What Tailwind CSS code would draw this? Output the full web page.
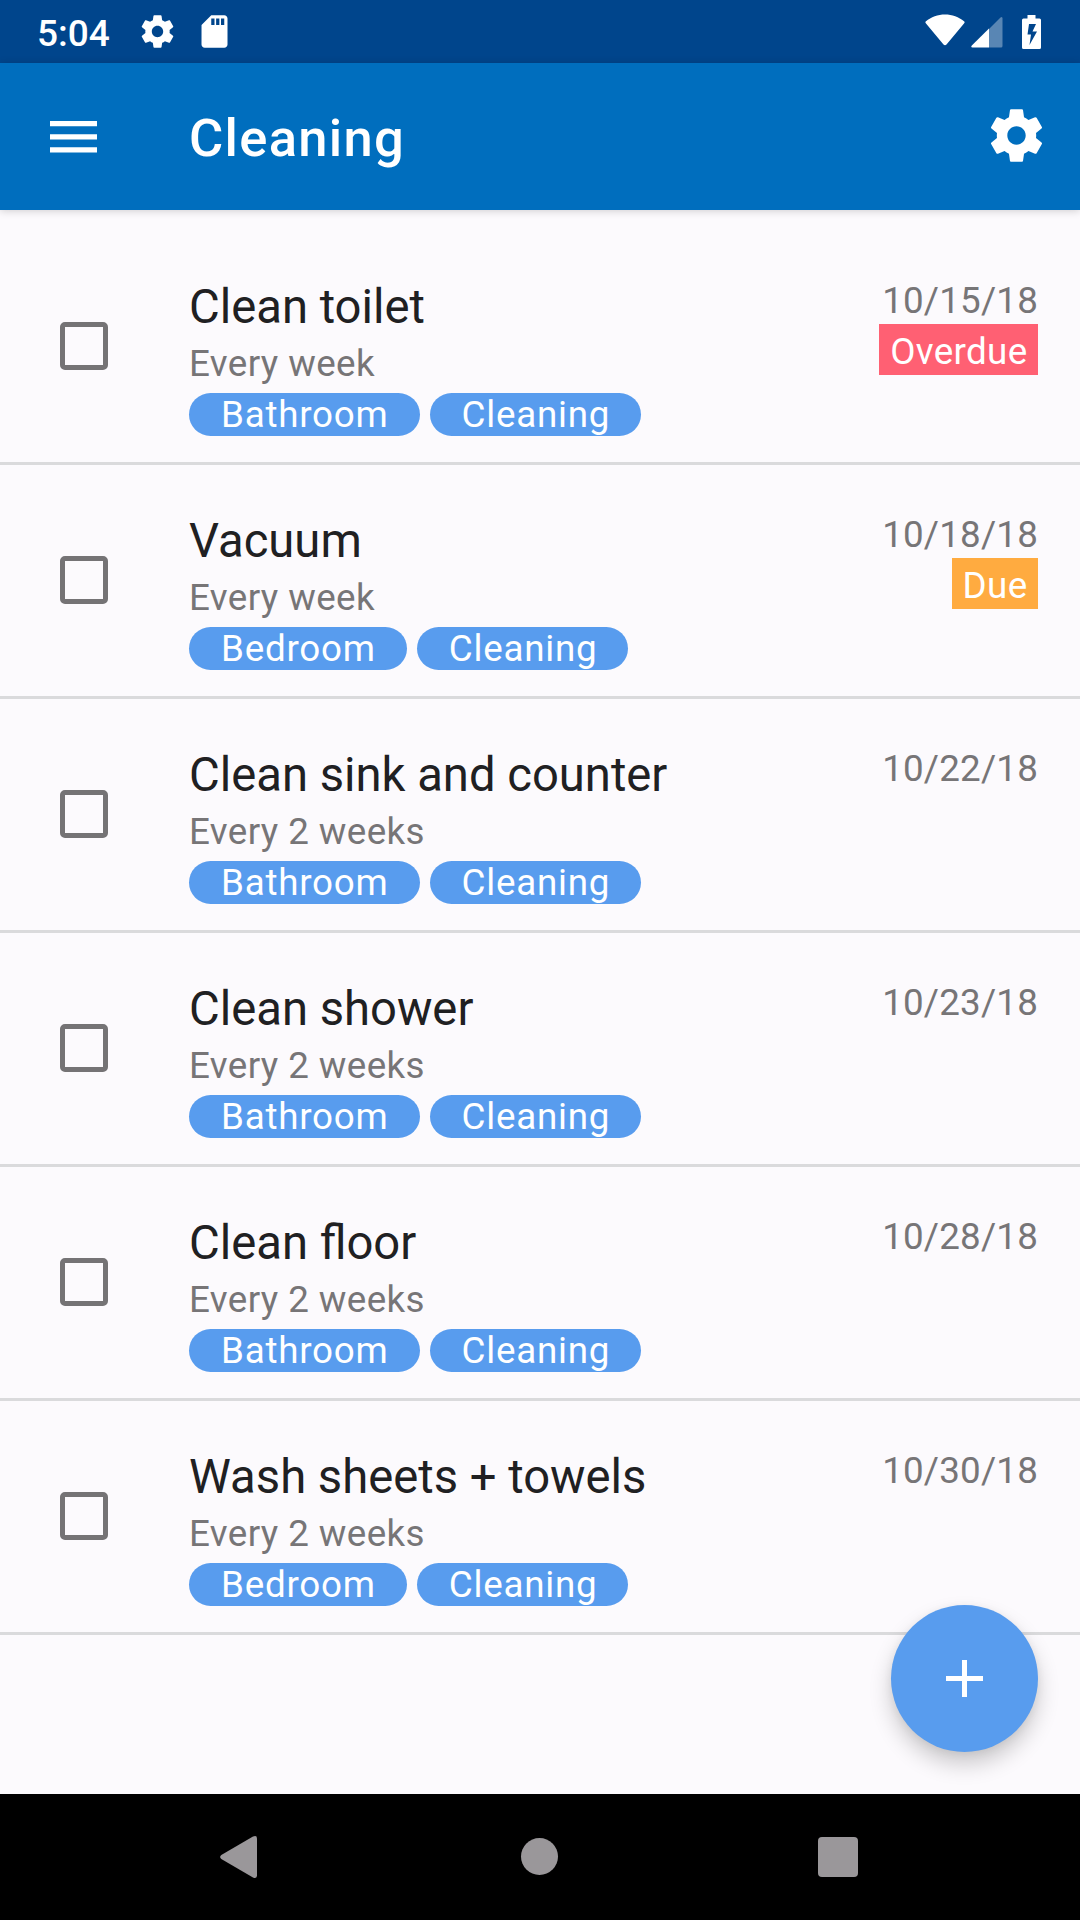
<!DOCTYPE html>
<html lang="en">
<head>
    <meta charset="UTF-8">
    <meta name="viewport" content="width=device-width, initial-scale=1.0">
    <title>Cleaning</title>
    <script src="https://cdn.jsdelivr.net/npm/@tailwindcss/browser@4"></script>
</head>
<body class="bg-[#fcfafd] font-[Roboto,sans-serif]">
    <div class="relative flex flex-col w-[1080px] h-[1920px] overflow-hidden">
        <!-- Status bar -->
        <div class="flex shrink-0 items-center h-[63px] bg-[#00458c] pl-[37px] pr-[39px] text-white">
            <span class="w-[101px] text-[37px] leading-[42px] font-medium pt-[5px]">5:04</span>
            <svg class="w-[39px] h-[39px]" viewBox="0 0 24 24" fill="currentColor"><path d="M19.43 12.98c.04-.32.07-.64.07-.98s-.03-.66-.07-.98l2.11-1.65c.19-.15.24-.42.12-.64l-2-3.46c-.12-.22-.39-.3-.61-.22l-2.49 1c-.52-.4-1.08-.73-1.69-.98l-.38-2.65C14.46 2.18 14.25 2 14 2h-4c-.25 0-.46.18-.49.42l-.38 2.65c-.61.25-1.17.59-1.69.98l-2.49-1c-.23-.09-.49 0-.61.22l-2 3.46c-.13.22-.07.49.12.64l2.11 1.65c-.04.32-.07.65-.07.98s.03.66.07.98l-2.11 1.65c-.19.15-.24.42-.12.64l2 3.46c.12.22.39.3.61.22l2.49-1c.52.4 1.08.73 1.69.98l.38 2.65c.03.24.24.42.49.42h4c.25 0 .46-.18.49-.42l.38-2.65c.61-.25 1.17-.59 1.69-.98l2.49 1c.23.09.49 0 .61-.22l2-3.46c.12-.22.07-.49-.12-.64l-2.11-1.65zM12 15.5c-1.93 0-3.5-1.57-3.5-3.5s1.57-3.5 3.5-3.5 3.5 1.57 3.5 3.5-1.57 3.5-3.5 3.5z"/></svg>
            <svg class="w-[39px] h-[39px] ml-[18px]" viewBox="0 0 24 24" fill="currentColor"><path d="M18 2h-8L4.02 8 4 20c0 1.1.9 2 2 2h12c1.1 0 2-.9 2-2V4c0-1.1-.9-2-2-2zm-6 6h-2V4h2v4zm3 0h-2V4h2v4zm3 0h-2V4h2v4z"/></svg>
            <svg class="w-[40px] h-[32px] ml-auto -mt-[3px]" viewBox="0 0 40 32" fill="currentColor"><path d="M1 9.500Q-.3 8.300 1 7.300C6 3 13 .4 20 .4S34 3 39 7.300q1.300 1 0 2.200L21.500 30.500q-1.500 1.500-3 0z"/></svg>
            <svg class="w-[32px] h-[32px] ml-[6px]" viewBox="0 0 32 32" fill="currentColor"><path fill-opacity=".35" d="M18 13 29.500 1.400Q31.500 0 31.500 2.500V30q0 1.500-1.500 1.500H18z"/><path d="M18 12.500v19H1.500Q-.6 31.500 .8 29.500z"/></svg>
            <svg class="w-[19px] h-[34px] ml-[19px]" viewBox="0 0 19 34" fill="currentColor"><path fill-rule="evenodd" d="M5.500 0h8v3.500h4Q19 3.500 19 5v27.500Q19 34 17.500 34h-16Q0 34 0 32.500V5q0-1.500 1.500-1.500h4zM7 9 5.500 19.500H9L7.500 30 15 16.500H10.500L14 9z"/></svg>
        </div>

        <!-- App bar -->
        <div class="relative z-10 flex shrink-0 items-center h-[147px] bg-[#006ebe] pl-[50px] pr-[32px] text-white shadow-[0_1px_8px_rgba(0,0,0,0.18)]">
            <svg class="w-[47px] h-[32px]" viewBox="0 0 47 32" fill="currentColor"><path d="M0 0h47v5.200H0zM0 13.200h47v5.200H0zM0 26.300h47v5.200H0z"/></svg>
            <h1 class="ml-[92px] pt-[3px] text-[52.5px] leading-[62px] font-medium tracking-[1.3px]">Cleaning</h1>
            <svg class="w-[63px] h-[63px] ml-auto -mt-[2px]" viewBox="0 0 24 24" fill="currentColor"><path d="M19.43 12.98c.04-.32.07-.64.07-.98s-.03-.66-.07-.98l2.11-1.65c.19-.15.24-.42.12-.64l-2-3.46c-.12-.22-.39-.3-.61-.22l-2.49 1c-.52-.4-1.08-.73-1.69-.98l-.38-2.65C14.46 2.18 14.25 2 14 2h-4c-.25 0-.46.18-.49.42l-.38 2.65c-.61.25-1.17.59-1.69.98l-2.49-1c-.23-.09-.49 0-.61.22l-2 3.46c-.13.22-.07.49.12.64l2.11 1.65c-.04.32-.07.65-.07.98s.03.66.07.98l-2.11 1.65c-.19.15-.24.42-.12.64l2 3.46c.12.22.39.3.61.22l2.49-1c.52.4 1.08.73 1.69.98l.38 2.65c.03.24.24.42.49.42h4c.25 0 .46-.18.49-.42l.38-2.65c.61-.25 1.17-.59 1.69-.98l2.49 1c.23.09.49 0 .61-.22l2-3.46c.12-.22.07-.49-.12-.64l-2.11-1.65zM12 15.5c-1.93 0-3.5-1.57-3.5-3.5s1.57-3.5 3.5-3.5 3.5 1.57 3.5 3.5-1.57 3.5-3.5 3.5z"/></svg>
        </div>

        <!-- Task list -->
        <ul id="tasks" class="flex flex-col grow pt-[21px]"></ul>

        <!-- Add button -->
        <button class="absolute left-[891px] top-[1605px] z-20 flex items-center justify-center w-[147px] h-[147px] rounded-full bg-[#589cee] text-white shadow-[0_12px_22px_rgba(0,0,0,0.2),0_2px_8px_rgba(0,0,0,0.06)]" aria-label="Add task">
            <svg class="w-[37px] h-[37px]" viewBox="0 0 37 37" fill="currentColor"><path d="M16 0h5v16h16v5H21v16h-5V21H0v-5h16z"/></svg>
        </button>

        <!-- Navigation bar -->
        <div class="flex shrink-0 items-center h-[126px] bg-black pl-[220px] pr-[222px] text-[#9a979a]">
            <svg class="w-[37px] h-[42px]" viewBox="0 0 37 42" fill="currentColor"><path d="M1.300 19 33 .6Q37-1 37 2.500v37Q37 43 33 41.400L1.300 23Q-1 21 1.300 19z"/></svg>
            <div class="w-[37px] h-[37px] ml-[264px] -mt-px rounded-full bg-[#9a979a]"></div>
            <div class="w-[40px] h-[40px] ml-auto rounded-[4px] bg-[#9a979a]"></div>
        </div>
    </div>

    <script>
        const tasks = [
            {name: 'Clean toilet', repeat: 'Every week', tags: ['Bathroom', 'Cleaning'], date: '10/15/18', status: 'Overdue'},
            {name: 'Vacuum', repeat: 'Every week', tags: ['Bedroom', 'Cleaning'], date: '10/18/18', status: 'Due'},
            {name: 'Clean sink and counter', repeat: 'Every 2 weeks', tags: ['Bathroom', 'Cleaning'], date: '10/22/18'},
            {name: 'Clean shower', repeat: 'Every 2 weeks', tags: ['Bathroom', 'Cleaning'], date: '10/23/18'},
            {name: 'Clean floor', repeat: 'Every 2 weeks', tags: ['Bathroom', 'Cleaning'], date: '10/28/18'},
            {name: 'Wash sheets + towels', repeat: 'Every 2 weeks', tags: ['Bedroom', 'Cleaning'], date: '10/30/18'}
        ];
        const statusColors = {Overdue: 'bg-[#ff6073]', Due: 'bg-[#ffab40]'};

        document.getElementById('tasks').innerHTML = tasks.map(task => `
            <li class="flex items-start h-[234px] shrink-0 border-b-3 border-[#dadadc] pl-[60px] pr-[42px]">
                <div class="w-[48px] h-[48px] mt-[91px] rounded-[5px] border-5 border-[#757375]"></div>
                <div class="ml-[81px] pt-[48px]">
                    <div class="h-[56px] text-[47.2px] leading-[57px] text-[#202022]">${task.name}</div>
                    <div class="h-[58px] pt-[7px] text-[36.75px] leading-[43px] tracking-[0.4px] text-[#777577]">${task.repeat}</div>
                    <div class="flex gap-[10px]">
                        ${task.tags.map(tag => `<span class="h-[43px] pl-[32px] pr-[31px] rounded-full bg-[#589cee] text-[36.75px] leading-[43px] tracking-[0.77px] text-white">${tag}</span>`).join('')}
                    </div>
                </div>
                <div class="flex flex-col items-end ml-auto pt-[48px]">
                    <span class="h-[45px] text-[36.75px] leading-[43px] tracking-[0.2px] text-[#777577]">${task.date}</span>
                    ${task.status ? `<span class="h-[51px] pl-[11px] pr-[10.5px] ${statusColors[task.status]} text-[36.75px] leading-[56px] tracking-[0.35px] text-white">${task.status}</span>` : ''}
                </div>
            </li>`).join('');
    </script>
</body>
</html>
